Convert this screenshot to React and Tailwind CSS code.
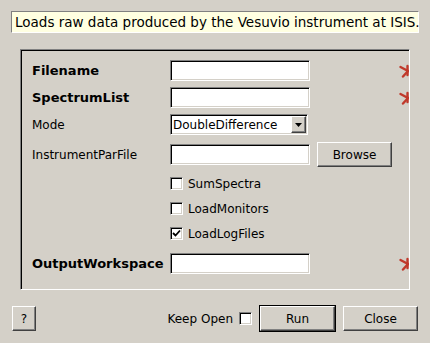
import React from 'react';

const sunken =
  'bg-white border border-t-[#808080] border-l-[#808080] border-b-white border-r-white shadow-[inset_1px_1px_0_#000,inset_-1px_-1px_0_#d4d0c8]';
const raised =
  'bg-[#d4d0c8] border border-t-white border-l-white border-b-[#404040] border-r-[#404040] shadow-[inset_-1px_-1px_0_#808080]';

// required-field marker, half hidden behind the frame edge
function Asterisk() {
  return (
    <svg width="10" height="14" viewBox="0 0 10 14" className="shrink-0">
      <g stroke="#c0392b" strokeWidth="2.4" strokeLinecap="round">
        <line x1="9" y1="7" x2="1.5" y2="3" />
        <line x1="9" y1="7" x2="4" y2="12.5" />
        <line x1="8.5" y1="2" x2="8.5" y2="11" />
      </g>
    </svg>
  );
}

function TextBox() {
  return <div className={`w-[140px] h-[21px] ${sunken}`} />;
}

function CheckBox({ checked }) {
  return (
    <div className={`w-[13px] h-[13px] flex items-center justify-center ${sunken}`}>
      {checked && (
        <svg width="9" height="9" viewBox="0 0 9 9">
          <path d="M1 4 L3.5 6.5 L8 1.5" fill="none" stroke="#000" strokeWidth="1.8" />
        </svg>
      )}
    </div>
  );
}

function Row({ label, bold, children, required, className = '' }) {
  return (
    <div className={`flex items-center ${className}`}>
      <div className={`w-[138px] ${bold ? 'font-bold text-[13px]' : ''}`}>{label}</div>
      <div className="w-[229px] flex items-center">{children}</div>
      {required && <Asterisk />}
    </div>
  );
}

function CheckRow({ label, checked }) {
  return (
    <div className="flex items-center h-[25px] pl-[138px] gap-[5px]">
      <CheckBox checked={checked} />
      <span>{label}</span>
    </div>
  );
}

export default function App() {
  return (
    <div className="w-[430px] h-[343px] bg-[#d4d0c8] flex flex-col pt-[11px] font-['DejaVu_Sans',sans-serif] text-[12px] text-black overflow-hidden">
      <div className="mx-[11px] h-[22px] flex items-center pl-[3px] bg-[#ffffe1] border border-t-[#808080] border-l-[#808080] border-b-white border-r-white text-[13.5px] whitespace-nowrap">
        Loads raw data produced by the Vesuvio instrument at ISIS.
      </div>

      <div className="mt-[16px] ml-[20px] w-[390px] h-[241px] border border-t-[#808080] border-l-[#808080] border-b-white border-r-white shadow-[inset_1px_1px_0_#000] overflow-hidden pl-[11px] pt-[10px] flex flex-col">
        <Row label="Filename" bold required className="h-[21px]">
          <TextBox />
        </Row>
        <Row label="SpectrumList" bold required className="h-[21px] mt-[6px]">
          <TextBox />
        </Row>
        <Row label="Mode" className="h-[21px] mt-[6px]">
          <div className={`w-[138px] h-[21px] flex items-center justify-between pl-[2px] pr-[1px] ${sunken}`}>
            <span>DoubleDifference</span>
            <div className={`w-[15px] h-[17px] flex items-center justify-center ${raised}`}>
              <svg width="7" height="4" viewBox="0 0 7 4">
                <path d="M0 0 H7 L3.5 4 Z" fill="#000" />
              </svg>
            </div>
          </div>
        </Row>
        <Row label="InstrumentParFile" className="h-[25px] mt-[7px]">
          <TextBox />
          <button className={`ml-[7px] w-[75px] h-[25px] ${raised}`}>Browse</button>
        </Row>
        <div className="mt-[4px]">
          <CheckRow label="SumSpectra" />
          <CheckRow label="LoadMonitors" />
          <CheckRow label="LoadLogFiles" checked />
        </div>
        <Row label="OutputWorkspace" bold required className="h-[21px] mt-[7px]">
          <TextBox />
        </Row>
      </div>

      <div className="mt-[15px] px-[12px] flex items-center">
        <button className={`w-[24px] h-[25px] ${raised}`}>?</button>
        <div className="flex-1" />
        <span>Keep Open</span>
        <div className="ml-[6px]">
          <CheckBox />
        </div>
        <button className="ml-[7px] w-[77px] h-[27px] border border-black">
          <div className={`w-full h-full flex items-center justify-center ${raised}`}>Run</div>
        </button>
        <button className={`ml-[7px] w-[75px] h-[25px] ${raised}`}>Close</button>
      </div>
    </div>
  );
}
